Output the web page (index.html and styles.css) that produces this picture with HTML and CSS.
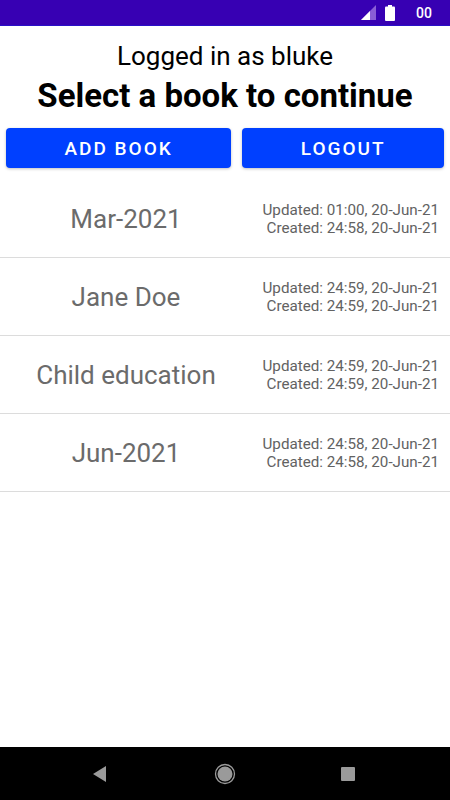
FILE: index.html
```html
<!DOCTYPE html>
<html lang="en">
<head>
  <meta charset="UTF-8">
  <meta name="viewport" content="width=device-width, initial-scale=1.0">
  <title>Books</title>
  <link rel="stylesheet" href="styles.css">
</head>
<body>
  <div id="phone">
    <div id="status-bar">
      <svg class="signal" width="16" height="16" viewBox="0 0 16 16">
        <polygon points="0,15 15,0 15,15" fill="#8a5ed6"/>
        <polygon points="0,15 9,6 9,15" fill="#fff"/>
      </svg>
      <svg class="battery" width="10" height="16" viewBox="0 0 10 16">
        <rect x="3" y="0" width="4" height="2" fill="#fff"/>
        <rect x="0" y="1.5" width="10" height="14.5" rx="1" fill="#fff"/>
      </svg>
      <span class="clock">00</span>
    </div>

    <div id="content">
      <div class="user">Logged in as bluke</div>
      <h1>Select a book to continue</h1>

      <div id="actions">
        <button class="add">Add book</button>
        <button class="logout">Logout</button>
      </div>

      <div id="books">
        <div class="book-row">
          <div class="book-name">Mar-2021</div>
          <div class="book-dates">Updated: 01:00, 20-Jun-21<br>Created: 24:58, 20-Jun-21</div>
        </div>
        <div class="book-row">
          <div class="book-name">Jane Doe</div>
          <div class="book-dates">Updated: 24:59, 20-Jun-21<br>Created: 24:59, 20-Jun-21</div>
        </div>
        <div class="book-row">
          <div class="book-name">Child education</div>
          <div class="book-dates">Updated: 24:59, 20-Jun-21<br>Created: 24:59, 20-Jun-21</div>
        </div>
        <div class="book-row">
          <div class="book-name">Jun-2021</div>
          <div class="book-dates">Updated: 24:58, 20-Jun-21<br>Created: 24:58, 20-Jun-21</div>
        </div>
      </div>
    </div>

    <div id="nav-bar">
      <svg width="18" height="18" viewBox="0 0 18 18">
        <polygon points="2,9 15,1 15,17" fill="#9a9a9a"/>
      </svg>
      <svg width="22" height="22" viewBox="0 0 22 22">
        <circle cx="11" cy="11" r="9.5" fill="none" stroke="#9a9a9a" stroke-width="1.3"/>
        <circle cx="11" cy="11" r="7.5" fill="#9a9a9a"/>
      </svg>
      <svg width="14" height="14" viewBox="0 0 14 14">
        <rect x="0" y="0" width="14" height="14" rx="1" fill="#9a9a9a"/>
      </svg>
    </div>
  </div>
</body>
</html>
```

FILE: styles.css
```css
body {
  margin: 0;
  font-family: Roboto, 'Liberation Sans', sans-serif;
  background: #fff;
}

#phone {
  width: 450px;
  height: 800px;
  display: flex;
  flex-direction: column;
}

#status-bar {
  height: 26px;
  background: #3700b3;
  border-bottom: 1px solid #2a10c8;
  box-sizing: border-box;
  display: flex;
  align-items: center;
  justify-content: flex-end;
  padding-right: 18px;
}
#status-bar .signal {
  margin-right: 8px;
}
#status-bar .battery {
  margin-right: 21px;
}
#status-bar .clock {
  color: #fff;
  font-size: 14px;
  font-weight: 500;
}

#content {
  flex: 1;
}

.user {
  text-align: center;
  font-size: 26px;
  line-height: 30px;
  margin-top: 15px;
  color: #000;
}

h1 {
  text-align: center;
  font-size: 33px;
  line-height: 38px;
  font-weight: 700;
  margin: 6px 0 0;
  color: #000;
}

#actions {
  display: flex;
  gap: 11px;
  padding: 0 6px;
  margin-top: 13px;
}
#actions button {
  flex: 1 1 auto;
  height: 40px;
  border: none;
  border-radius: 4px;
  background: #0040ff;
  color: #fff;
  font-family: Roboto, 'Liberation Sans', sans-serif;
  font-size: 19px;
  font-weight: 500;
  letter-spacing: 2px;
  text-transform: uppercase;
  box-shadow: 0 1px 3px rgba(0, 0, 0, 0.25);
  cursor: pointer;
}

#books {
  margin-top: 12px;
}
.book-row {
  display: grid;
  grid-template-columns: 252px 1fr;
  align-items: center;
  height: 78px;
  border-bottom: 1.5px solid #dcdcdc;
  box-sizing: border-box;
}
.book-name {
  text-align: center;
  font-size: 26px;
  color: #6b6b6b;
}
.book-dates {
  text-align: right;
  padding-right: 11px;
  font-size: 15.2px;
  line-height: 18px;
  color: #626262;
}

#nav-bar {
  height: 53px;
  background: #000;
  display: flex;
  align-items: center;
  gap: 105px;
  padding-left: 91px;
}
```
